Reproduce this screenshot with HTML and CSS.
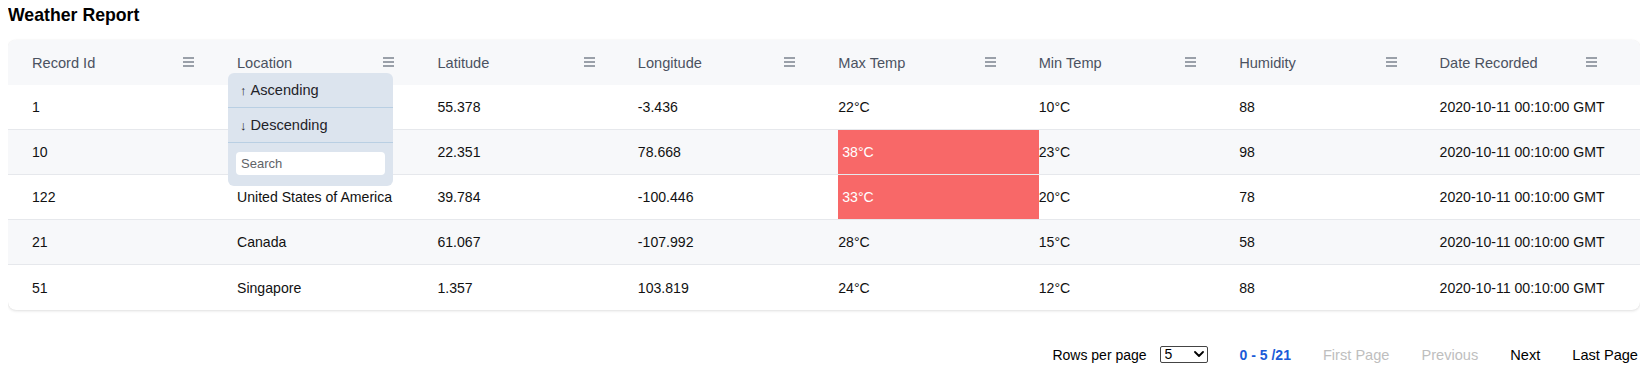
FILE: index.html
```html
<!DOCTYPE html>
<html lang="en">
<head>
    <meta charset="UTF-8">
    <meta name="viewport" content="width=device-width, initial-scale=1.0">
    <title>Weather Report</title>
    <link rel="stylesheet" href="styles.css">
</head>
<body>

<h2 class="title">Weather Report</h2>

<div class="card">
    <div class="row head">
        <div class="th"><span>Record Id</span><span class="menu-icon"><i></i><i></i><i></i></span></div>
        <div class="th">
            <span>Location</span><span class="menu-icon"><i></i><i></i><i></i></span>
            <div class="col-menu">
                <div class="col-menu-item"><span class="arrow">&uarr;</span>Ascending</div>
                <div class="col-menu-item"><span class="arrow">&darr;</span>Descending</div>
                <div class="col-menu-search"><input type="text" placeholder="Search"></div>
            </div>
        </div>
        <div class="th"><span>Latitude</span><span class="menu-icon"><i></i><i></i><i></i></span></div>
        <div class="th"><span>Longitude</span><span class="menu-icon"><i></i><i></i><i></i></span></div>
        <div class="th"><span>Max Temp</span><span class="menu-icon"><i></i><i></i><i></i></span></div>
        <div class="th"><span>Min Temp</span><span class="menu-icon"><i></i><i></i><i></i></span></div>
        <div class="th"><span>Humidity</span><span class="menu-icon"><i></i><i></i><i></i></span></div>
        <div class="th"><span>Date Recorded</span><span class="menu-icon"><i></i><i></i><i></i></span></div>
    </div>

    <div class="row">
        <div class="td">1</div>
        <div class="td">United Kingdom</div>
        <div class="td">55.378</div>
        <div class="td">-3.436</div>
        <div class="td">22°C</div>
        <div class="td">10°C</div>
        <div class="td">88</div>
        <div class="td">2020-10-11 00:10:00 GMT</div>
    </div>
    <div class="row">
        <div class="td">10</div>
        <div class="td">India</div>
        <div class="td">22.351</div>
        <div class="td">78.668</div>
        <div class="td hot">38°C</div>
        <div class="td">23°C</div>
        <div class="td">98</div>
        <div class="td">2020-10-11 00:10:00 GMT</div>
    </div>
    <div class="row">
        <div class="td">122</div>
        <div class="td">United States of America</div>
        <div class="td">39.784</div>
        <div class="td">-100.446</div>
        <div class="td hot">33°C</div>
        <div class="td">20°C</div>
        <div class="td">78</div>
        <div class="td">2020-10-11 00:10:00 GMT</div>
    </div>
    <div class="row">
        <div class="td">21</div>
        <div class="td">Canada</div>
        <div class="td">61.067</div>
        <div class="td">-107.992</div>
        <div class="td">28°C</div>
        <div class="td">15°C</div>
        <div class="td">58</div>
        <div class="td">2020-10-11 00:10:00 GMT</div>
    </div>
    <div class="row">
        <div class="td">51</div>
        <div class="td">Singapore</div>
        <div class="td">1.357</div>
        <div class="td">103.819</div>
        <div class="td">24°C</div>
        <div class="td">12°C</div>
        <div class="td">88</div>
        <div class="td">2020-10-11 00:10:00 GMT</div>
    </div>
</div>

<div class="pager">
    <div class="per-page">
        <span>Rows per page</span>
        <span class="select-wrap">
            <select>
                <option>5</option>
                <option>10</option>
                <option>20</option>
            </select>
            <svg class="chevron" width="10" height="6" viewBox="0 0 10 6"><path d="M1 1l4 4 4-4" fill="none" stroke="#000" stroke-width="1.8" stroke-linecap="round" stroke-linejoin="round"/></svg>
        </span>
    </div>
    <span class="range">0 - 5 /21</span>
    <span class="page-link disabled">First Page</span>
    <span class="page-link disabled">Previous</span>
    <span class="page-link">Next</span>
    <span class="page-link">Last Page</span>
</div>

</body>
</html>
```

FILE: styles.css
```css
body {
    font-family: "Liberation Sans", Arial, sans-serif;
    margin: 0 10px 0 8px;
    background: #fff;
    color: #111;
}
.title {
    font-size: 17.7px;
    line-height: 20px;
    margin: 5px 0 0;
    color: #000;
}
.card {
    margin-top: 15px;
    border-radius: 8px;
    background: #fff;
    box-shadow: 0 1px 3px rgba(0, 0, 0, 0.12), 0 0 1px rgba(0, 0, 0, 0.08);
}
.row {
    display: grid;
    grid-template-columns: 205px repeat(7, 1fr);
    padding-left: 24px;
    height: 44px;
    border-top: 1px solid #e6e8ec;
    font-size: 14.1px;
}
.row:nth-child(2) {
    border-top: none;
}
.row:nth-child(odd) {
    background: #f7f8fa;
}
.row:last-child {
    height: 45px;
    border-radius: 0 0 8px 8px;
}
.head {
    height: 45px;
    border-top: none;
    background: #eff1f5;
    border-radius: 8px 8px 0 0;
    font-size: 14.6px;
}
.th {
    position: relative;
    display: flex;
    align-items: center;
    justify-content: space-between;
    padding-right: 43px;
    color: #4b5261;
    padding-top: 1px;
}
.menu-icon {
    display: flex;
    flex-direction: column;
    gap: 2px;
    width: 11px;
    margin-bottom: 3px;
}
.menu-icon i {
    display: block;
    height: 2px;
    background: #9aa0a9;
}
.td {
    display: flex;
    align-items: center;
    white-space: nowrap;
}
.td.hot {
    background: #f86868;
    color: #fff;
    padding-left: 4px;
}
.col-menu {
    position: absolute;
    left: -9px;
    top: 33px;
    width: 165px;
    background: #dce4ee;
    border-radius: 6px;
    z-index: 5;
    color: #1f2329;
}
.col-menu-item {
    height: 34px;
    display: flex;
    align-items: center;
    padding-left: 12px;
    border-bottom: 1px solid #b9cfe3;
    font-size: 14.6px;
}
.arrow {
    font-size: 13px;
    margin-right: 4px;
}
.col-menu-search {
    padding: 9px 8px 11px;
}
.col-menu-search input {
    display: block;
    width: 100%;
    box-sizing: border-box;
    height: 23px;
    border: none;
    border-radius: 4px;
    padding: 0 5px;
    font-family: "Liberation Sans", Arial, sans-serif;
    font-size: 13px;
    background: #fff;
}
.col-menu-search input::placeholder {
    color: #5f6368;
}
.pager {
    display: flex;
    justify-content: flex-end;
    align-items: center;
    gap: 32px;
    margin-top: 36px;
    font-size: 14.6px;
    padding-right: 2px;
}
.per-page {
    display: flex;
    align-items: center;
    gap: 13px;
    font-size: 14px;
    color: #000;
}
.select-wrap {
    position: relative;
    display: inline-block;
}
.select-wrap select {
    appearance: none;
    -webkit-appearance: none;
    display: block;
    width: 48px;
    height: 17px;
    border: 1px solid #444;
    border-radius: 2px;
    background: #fff;
    padding: 0 0 0 4px;
    font-family: "Liberation Sans", Arial, sans-serif;
    font-size: 14px;
    line-height: 15px;
    color: #000;
}
.chevron {
    position: absolute;
    right: 4px;
    top: 5px;
    pointer-events: none;
}
.range {
    color: #1b5bd8;
    font-weight: bold;
    font-size: 14px;
}
.page-link {
    color: #000;
    cursor: pointer;
}
.page-link.disabled {
    color: #bebebe;
}
```
